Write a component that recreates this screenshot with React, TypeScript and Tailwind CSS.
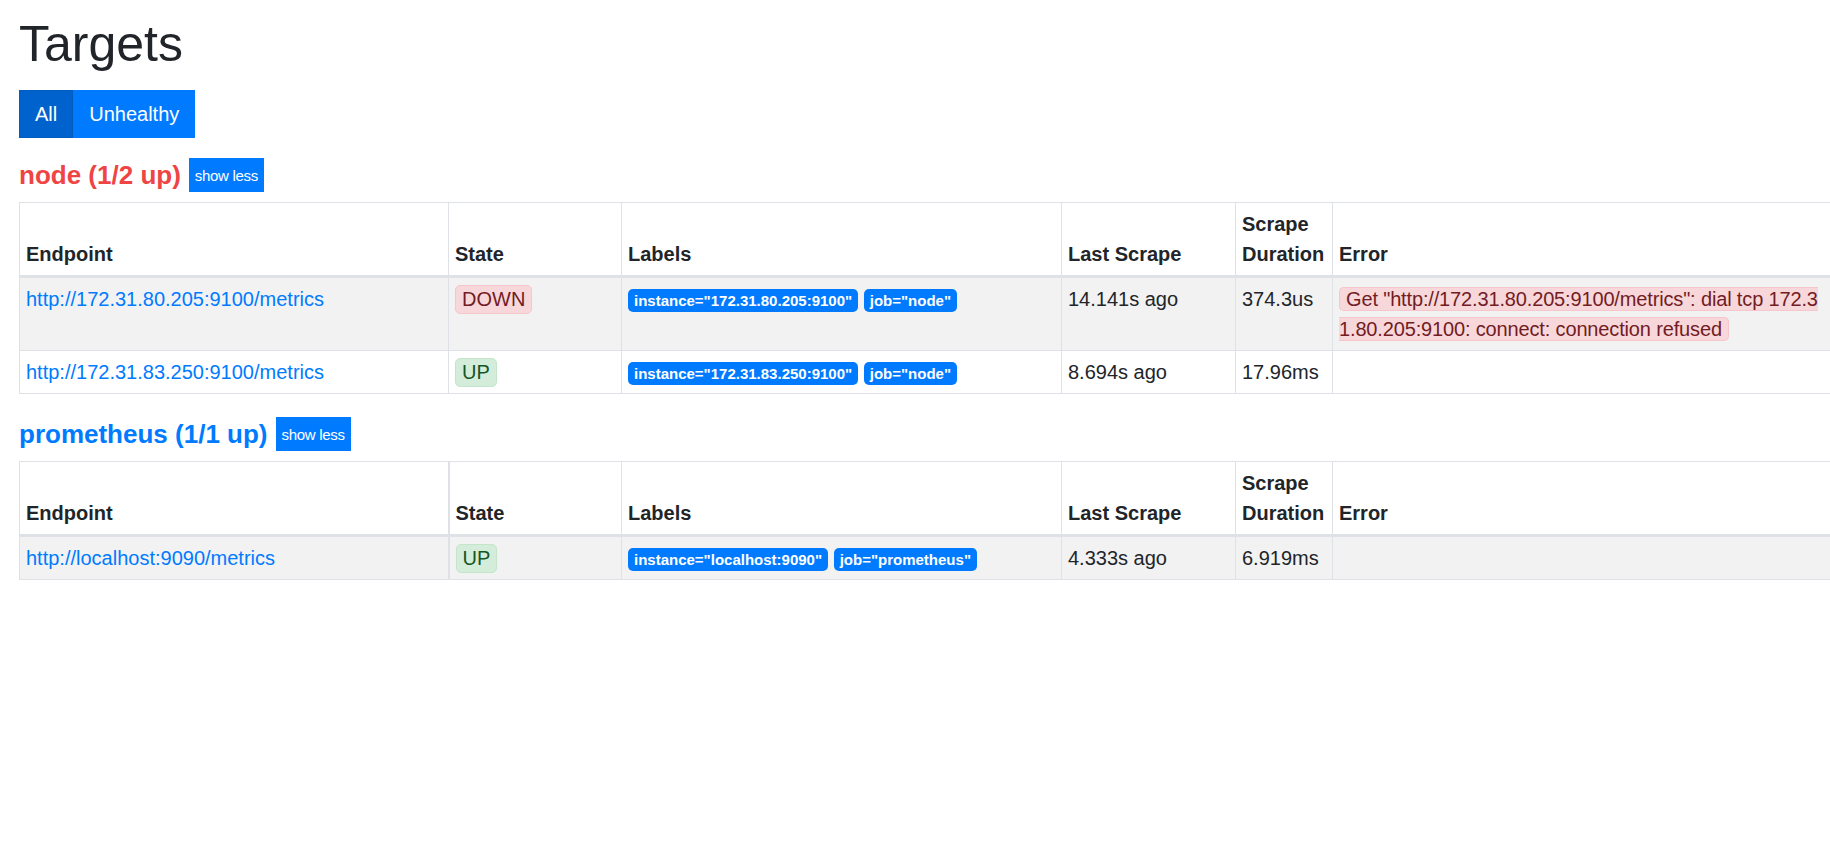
import React from 'react'

type Target = {
  endpoint: string
  up: boolean
  labels: [string, string][]
  lastScrape: string
  duration: string
  error?: [string, string]
}

type Pool = {
  name: string
  upCount: number
  targets: Target[]
  thickFirst?: boolean
}

const POOLS: Pool[] = [
  {
    name: 'node',
    upCount: 1,
    targets: [
      {
        endpoint: 'http://172.31.80.205:9100/metrics',
        up: false,
        labels: [['instance', '172.31.80.205:9100'], ['job', 'node']],
        lastScrape: '14.141s ago',
        duration: '374.3us',
        error: [
          'Get "http://172.31.80.205:9100/metrics": dial tcp 172.3',
          '1.80.205:9100: connect: connection refused',
        ],
      },
      {
        endpoint: 'http://172.31.83.250:9100/metrics',
        up: true,
        labels: [['instance', '172.31.83.250:9100'], ['job', 'node']],
        lastScrape: '8.694s ago',
        duration: '17.96ms',
      },
    ],
  },
  {
    name: 'prometheus',
    upCount: 1,
    thickFirst: true,
    targets: [
      {
        endpoint: 'http://localhost:9090/metrics',
        up: true,
        labels: [['instance', 'localhost:9090'], ['job', 'prometheus']],
        lastScrape: '4.333s ago',
        duration: '6.919ms',
      },
    ],
  },
]

function StateBadge({ up }: { up: boolean }) {
  return up ? (
    <span className="inline-block px-[6px] leading-[27px] rounded-[5px] border border-[#c3e6cb] bg-[#d4edda] text-[#155724]">
      UP
    </span>
  ) : (
    <span className="inline-block px-[6px] leading-[27px] rounded-[5px] border border-[#f5c6cb] bg-[#f8d7da] text-[#721c24]">
      DOWN
    </span>
  )
}

function PoolTable({ pool }: { pool: Pool }) {
  const allUp = pool.upCount === pool.targets.length
  const th = 'border border-[#dee2e6] border-b-[3px] p-[6px] text-left align-bottom font-bold'
  const td = 'border border-[#dee2e6] p-[6px] align-top'
  return (
    <div>
      {/* pool heading */}
      <div className="flex items-center gap-[8px] h-[34px] mb-[10px]">
        <span className={`text-[26px] leading-[30px] font-bold ${allUp ? 'text-[#007bff]' : 'text-[#ef4444]'}`}>
          {pool.name} ({pool.upCount}/{pool.targets.length} up)
        </span>
        <button className="h-[34px] px-[6px] bg-[#007bff] text-white text-[15px] tracking-[-0.3px] leading-none">
          show less
        </button>
      </div>

      <table className="table-fixed border-collapse w-[1815px]">
        <colgroup>
          <col className="w-[429px]" />
          <col className="w-[173px]" />
          <col className="w-[440px]" />
          <col className="w-[174px]" />
          <col className="w-[97px]" />
          <col className="w-[502px]" />
        </colgroup>
        <thead>
          <tr>
            <th className={`${th} ${pool.thickFirst ? 'border-r-2' : ''}`}>Endpoint</th>
            <th className={th}>State</th>
            <th className={th}>Labels</th>
            <th className={th}>Last Scrape</th>
            <th className={th}>Scrape<br />Duration</th>
            <th className={th}>Error</th>
          </tr>
        </thead>
        <tbody>
          {pool.targets.map((t, i) => (
            <tr key={t.endpoint} className={i % 2 === 0 ? 'bg-[#f2f2f2]' : 'bg-white'}>
              <td className={`${td} ${pool.thickFirst ? 'border-r-2' : ''}`}>
                <a href="#" className="text-[#007bff]">{t.endpoint}</a>
              </td>
              <td className={td}>
                <StateBadge up={t.up} />
              </td>
              <td className={td}>
                {t.labels.map(([k, v], j) => (
                  <span key={k}>
                    {j > 0 && ' '}
                    <span className="inline-block bg-[#007bff] text-white font-bold text-[15px] leading-none px-[6px] py-[4px] rounded-[5px]">
                      {k}="{v}"
                    </span>
                  </span>
                ))}
              </td>
              <td className={td}>{t.lastScrape}</td>
              <td className={td}>{t.duration}</td>
              <td className={`${td} whitespace-nowrap`}>
                {t.error && (
                  <span className="bg-[#f8d7da] text-[#721c24] border border-[#f5c6cb] rounded-[5px] px-[6px] tracking-[-0.15px]">
                    {t.error[0]}
                    <br />
                    {t.error[1]}
                  </span>
                )}
              </td>
            </tr>
          ))}
        </tbody>
      </table>
    </div>
  )
}

export default function App() {
  return (
    <div className="w-[1830px] h-[848px] overflow-hidden bg-white text-[#212529] text-[20px] leading-[30px] font-['Liberation_Sans',Arial,sans-serif]">
      <div className="px-[19px] pt-[14px]">
        <h1 className="text-[50px] leading-[60px] mb-[16px]">Targets</h1>

        {/* filter buttons */}
        <div className="flex mb-[20px]">
          <button className="h-[48px] px-[15px] bg-[#0062cc] border border-[#005cbf] text-white">All</button>
          <button className="h-[48px] px-[15px] bg-[#007bff] border border-[#007bff] text-white">Unhealthy</button>
        </div>

        <div className="flex flex-col gap-[23px]">
          {POOLS.map((p) => (
            <PoolTable key={p.name} pool={p} />
          ))}
        </div>
      </div>
    </div>
  )
}
